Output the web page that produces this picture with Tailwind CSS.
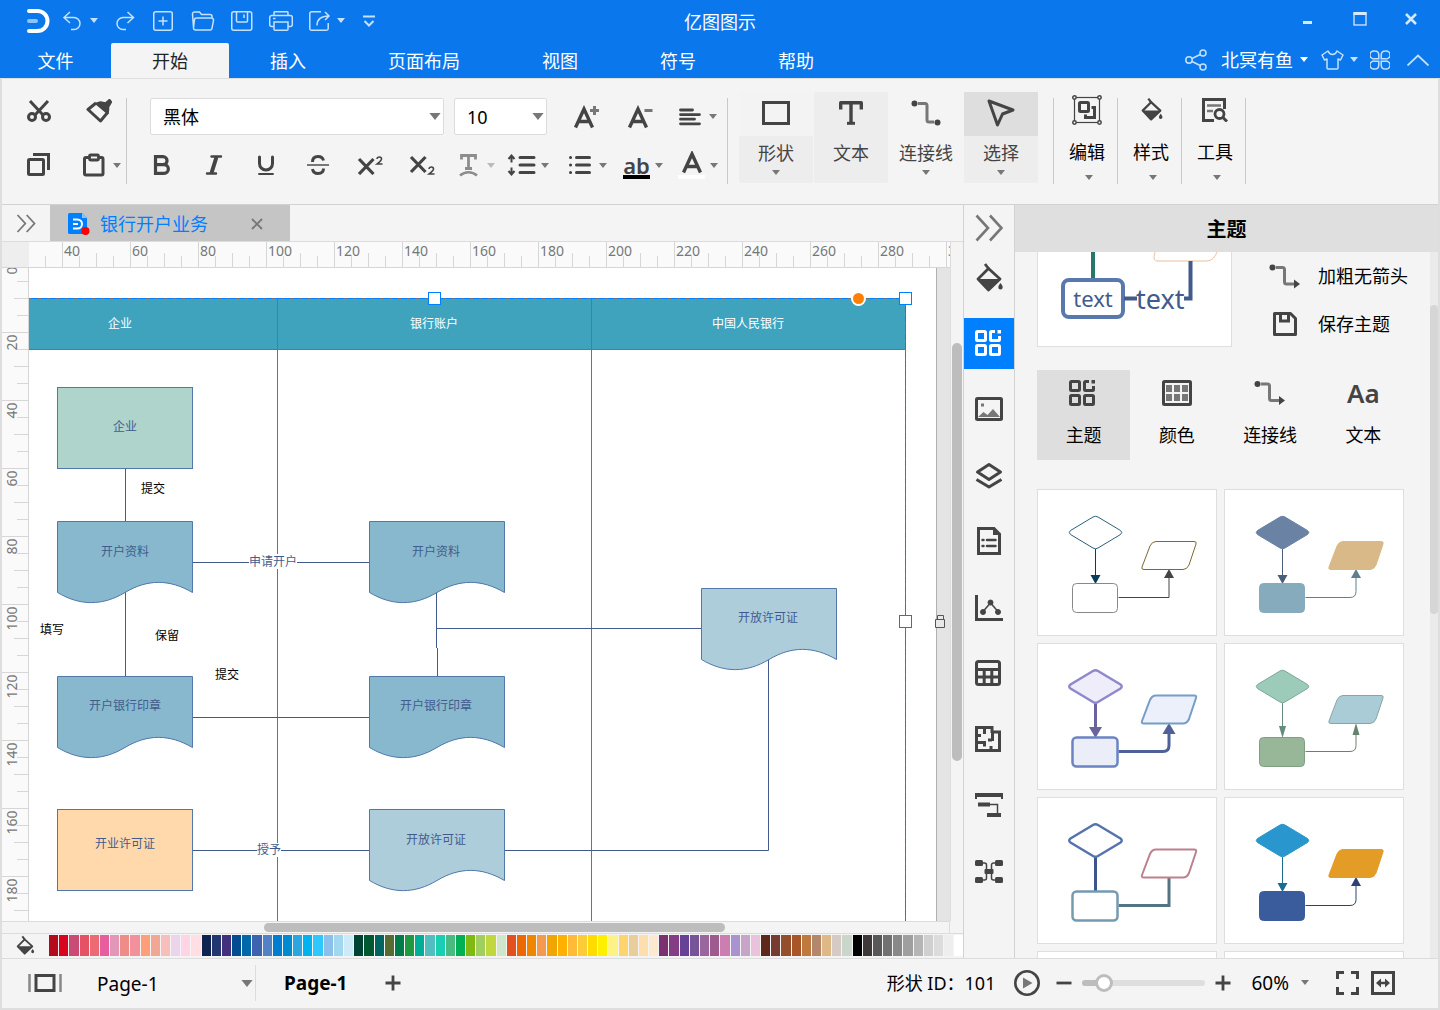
<!DOCTYPE html>
<html lang="zh-CN">
<head>
    <meta charset="UTF-8">
    <meta name="viewport" content="width=device-width, initial-scale=1.0">
    <title>亿图图示</title>
    <script src="https://cdn.jsdelivr.net/npm/@tailwindcss/browser@4"></script>
    <style>
        body {
            font-family: 'Noto Sans', 'Noto Sans CJK SC', sans-serif;
        }
        button, select {
            flex-shrink: 0;
        }
        svg {
            flex-shrink: 0;
        }
    </style>
</head>
<body class="h-screen flex flex-col overflow-hidden bg-[#f4f4f4] text-lg leading-6 text-black">

    <!-- Shared icons -->
    <svg class="hidden">
        <symbol id="caret" viewBox="0 0 8 5"><path d="M0 0h8L4 5z" fill="currentColor"/></symbol>
        <symbol id="bucket" viewBox="0 0 28 30">
            <path d="M3 17 13.500 6.500 25 17 13.500 28z" fill="none" stroke="currentColor" stroke-width="2.800" stroke-linejoin="round"/>
            <path d="M3 17h22L13.500 28z" fill="currentColor"/>
            <path d="M10 2l3.500 4.500" stroke="currentColor" stroke-width="2.800" fill="none"/>
            <path d="M25.500 21c1.500 2 2.200 3 2.200 4.300a2.200 2.200 0 0 1-4.400 0c0-1.300.7-2.300 2.200-4.300z" fill="currentColor"/>
        </symbol>
        <symbol id="grid" viewBox="0 0 26 26">
            <g fill="none" stroke="currentColor" stroke-width="3">
                <rect x="1.500" y="1.500" width="9" height="9" rx="1"/>
                <rect x="1.500" y="15.500" width="9" height="9" rx="1"/>
                <rect x="15.500" y="15.500" width="9" height="9" rx="1"/>
                <path d="M20 1.500h-3.500a1 1 0 0 0-1 1v7a1 1 0 0 0 1 1h7a1 1 0 0 0 1-1V6"/>
            </g>
            <path d="M22.500 0H26v3.500h-3.500z" fill="currentColor"/>
        </symbol>
        <symbol id="connector" viewBox="0 0 32 25">
            <path d="M7 3.500h6.500a2 2 0 0 1 2 2V18a2 2 0 0 0 2 2H26" fill="none" stroke="#777" stroke-width="3"/>
            <circle cx="3.500" cy="3.500" r="3" fill="#444"/>
            <path d="M25 15.500v9l6-4.500z" fill="#444"/>
        </symbol>
        <symbol id="chevrons" viewBox="0 0 28 28">
            <path d="M1.500 1.500 13 14 1.500 26.500M15 1.500 26.500 14 15 26.500" fill="none" stroke="#777" stroke-width="2.600"/>
        </symbol>
    </svg>

    <header class="bg-[#0a77ec] text-white">
        <!-- Title bar -->
        <div class="grid grid-cols-[1fr_auto_1fr] items-center h-[43px] text-[#c6e1fd]">
            <div class="flex items-center pl-[26px] pb-0.5">
                <svg class="w-6 h-6" viewBox="0 0 24 24" fill="none" stroke-linecap="round">
                    <path d="M3 2h8.500a10 10 0 0 1 0 20H3" stroke="#fff" stroke-width="4"/>
                    <path d="M3 12h7" stroke="#8cc3fb" stroke-width="4"/>
                </svg>
                <button class="flex items-center ml-3" aria-label="撤销">
                    <svg class="w-5 h-5" viewBox="0 0 20 20" fill="none" stroke="currentColor" stroke-width="1.500"><path d="M8 1 2 6.500 8 12M2 6.500h10a6 6 0 0 1 0 12H9"/></svg>
                    <svg class="w-2 h-[5px] ml-2"><use href="#caret"/></svg>
                </button>
                <button class="ml-[17px]" aria-label="重做">
                    <svg class="w-5 h-5" viewBox="0 0 20 20" fill="none" stroke="currentColor" stroke-width="1.500"><path d="M12.500 1l6 5.500-6 5.500M18.500 6.500H8a6 6 0 0 0 0 12h3"/></svg>
                </button>
                <button class="ml-[18px]" aria-label="新建">
                    <svg class="w-5 h-5" viewBox="0 0 20 20" fill="none" stroke="currentColor" stroke-width="1.500"><rect x=".75" y=".75" width="18.500" height="18.500" rx="2"/><path d="M10 5.500v9M5.500 10h9"/></svg>
                </button>
                <button class="ml-[18px]" aria-label="打开">
                    <svg class="w-6 h-5" viewBox="0 0 24 20" fill="none" stroke="currentColor" stroke-width="1.500"><path d="M2.500 16.500 1.500 3a2 2 0 0 1 2-2h5l2 2.500h8.500a2 2 0 0 1 2 2v1.500M5.500 7h15a2 2 0 0 1 2 2.300l-1.500 8a2 2 0 0 1-2 1.700H4.500a2 2 0 0 1-2-2.300l1-8A2 2 0 0 1 5.500 7z"/></svg>
                </button>
                <button class="ml-4" aria-label="保存">
                    <svg class="w-[22px] h-5" viewBox="0 0 22 20" fill="none" stroke="currentColor" stroke-width="1.500"><rect x=".75" y=".75" width="20" height="18.500" rx="2"/><path d="M5.500 1v9a1 1 0 0 0 1 1h9a1 1 0 0 0 1-1V1M13 3.500V7"/></svg>
                </button>
                <button class="ml-4" aria-label="打印">
                    <svg class="w-6 h-5" viewBox="0 0 24 20" fill="none" stroke="currentColor" stroke-width="1.500"><path d="M5 4.500V1.700a1 1 0 0 1 1-1h12a1 1 0 0 1 1 1v2.800M5 15.500H2.700a2 2 0 0 1-2-2v-7a2 2 0 0 1 2-2h18.600a2 2 0 0 1 2 2v7a2 2 0 0 1-2 2H19M5 11h14v7.200a1 1 0 0 1-1 1H6a1 1 0 0 1-1-1zM4 7.500h2.500"/></svg>
                </button>
                <button class="flex items-center ml-4" aria-label="导出">
                    <svg class="w-[22px] h-5" viewBox="0 0 22 20" fill="none" stroke="currentColor" stroke-width="1.500"><path d="M12 .75H2.500a1.700 1.700 0 0 0-1.700 1.700v15.100a1.700 1.700 0 0 0 1.700 1.700h15a1.700 1.700 0 0 0 1.700-1.700V12M8 14.500c0-6 4-9.500 12-9.500M16 1l4 4-4 4"/></svg>
                    <svg class="w-2 h-[5px] ml-[6px]"><use href="#caret"/></svg>
                </button>
                <button class="ml-[18px]" aria-label="自定义快速访问工具栏">
                    <svg class="w-3 h-3" viewBox="0 0 12 12" fill="none" stroke="currentColor" stroke-width="2"><path d="M0 1.500h12M1.500 6 6 10.500 10.500 6"/></svg>
                </button>
            </div>
            <h1 class="text-white">亿图图示</h1>
            <div class="flex items-center justify-end pr-[23px] pb-[6px] text-[#d5e9ff]">
                <button aria-label="最小化"><svg class="w-[10px] h-4" viewBox="0 0 10 16"><path d="M0 11.500h9" stroke="currentColor" stroke-width="3"/></svg></button>
                <button class="ml-10" aria-label="最大化"><svg class="w-[14px] h-[14px]" viewBox="0 0 14 14" fill="none" stroke="currentColor"><rect x="1" y="1" width="12" height="12" stroke-width="1.300"/><path d="M.5 1.500h13" stroke-width="3"/></svg></button>
                <button class="ml-[38px]" aria-label="关闭"><svg class="w-3 h-3" viewBox="0 0 12 12"><path d="M1 1l10 10M11 1 1 11" stroke="currentColor" stroke-width="2.500"/></svg></button>
            </div>
        </div>

        <!-- Menu tabs -->
        <div class="flex items-stretch justify-between h-[35px]">
            <nav class="flex">
                <button class="w-[111px]">文件</button>
                <button class="px-[41px] bg-[#f4f4f4] text-[#222] rounded-t-xs">开始</button>
                <button class="px-[41px]">插入</button>
                <button class="px-[41px]">页面布局</button>
                <button class="px-[41px]">视图</button>
                <button class="px-[41px]">符号</button>
                <button class="px-[41px]">帮助</button>
            </nav>
            <div class="flex items-center pr-[11px] pb-0.5 text-[#c6e1fd]">
                <button aria-label="分享">
                    <svg class="w-[22px] h-[22px]" viewBox="0 0 22 22" fill="none" stroke="currentColor" stroke-width="1.500"><circle cx="4" cy="11" r="3.200"/><circle cx="18" cy="4" r="3"/><circle cx="18" cy="18" r="3"/><path d="M7 9.500l8.200-4M7 12.500l8.200 4"/></svg>
                </button>
                <button class="flex items-center ml-[14px] text-white">北冥有鱼
                    <svg class="w-2 h-[5px] ml-[7px]"><use href="#caret"/></svg>
                </button>
                <button class="flex items-center ml-[13px]" aria-label="皮肤">
                    <svg class="w-[23px] h-5" viewBox="0 0 23 20" fill="none" stroke="currentColor" stroke-width="1.500" stroke-linejoin="round"><path d="M7 1 1 5l2.500 5 2.500-1v9a1 1 0 0 0 1 1h9a1 1 0 0 0 1-1V9l2.500 1L22 5l-6-4c-1 2.500-2.500 3.500-4.500 3.500S8 3.500 7 1z"/></svg>
                    <svg class="w-2 h-[5px] ml-[6px]"><use href="#caret"/></svg>
                </button>
                <button class="ml-3" aria-label="应用">
                    <svg class="w-5 h-5" viewBox="0 0 20 20" fill="none" stroke="currentColor" stroke-width="1.500"><path d="M4.800 1A4 4 0 1 0 4.800 8.800H8.800V4.800A4 4 0 0 0 4.800 1zM15.200 1A4 4 0 1 1 15.200 8.800H11.200V4.800A4 4 0 0 1 15.200 1zM4.800 19A4 4 0 1 1 4.800 11.200H8.800V15.200A4 4 0 0 1 4.800 19zM15.200 19A4 4 0 1 0 15.200 11.200H11.200V15.200A4 4 0 0 0 15.200 19z"/></svg>
                </button>
                <button class="ml-[17px]" aria-label="收起功能区">
                    <svg class="w-[22px] h-3" viewBox="0 0 22 12" fill="none" stroke="currentColor" stroke-width="1.800"><path d="M.5 11.500 11 1.500l10.500 10"/></svg>
                </button>
            </div>
        </div>
    </header>

    <div class="flex-1 min-h-0 flex flex-col border-x-2 border-b-2 border-t border-[#dedede]">

        <!-- Ribbon -->
        <div class="flex items-start h-[126px] border-b border-[#d2d2d2] text-[#444]">
            <div class="flex flex-col gap-[30px] mt-[19px] pt-px pl-[25px] w-[125px] h-[86px] border-r border-[#c9c9c9]">
                <div class="flex gap-[35px]">
                    <button aria-label="剪切">
                        <svg class="w-6 h-6" viewBox="0 0 24 24" fill="none" stroke="currentColor" stroke-width="3"><path d="M3 2l13 14M21 2 8 16"/><circle cx="5" cy="18" r="3.500"/><circle cx="19" cy="18" r="3.500"/></svg>
                    </button>
                    <button aria-label="格式刷">
                        <svg class="w-[26px] h-6" viewBox="0 0 26 24" fill="none" stroke="currentColor"><path d="M10 4 2 10.500 14.500 22l7.500-9" stroke-width="3" stroke-linejoin="round"/><path d="M9.500 4.500l5-1.500 5 1 4-3.500 2 2.500-3 5c0 2 .5 4-1 6.500z" fill="currentColor" stroke-width="1.500" stroke-linejoin="round"/></svg>
                    </button>
                </div>
                <div class="flex gap-8">
                    <button aria-label="复制">
                        <svg class="w-6 h-6" viewBox="0 0 24 24" fill="none" stroke="currentColor"><rect x="1.500" y="6.500" width="15" height="15" stroke-width="3" rx="1"/><path d="M6 1.500h15.500V17" stroke-width="3"/></svg>
                    </button>
                    <button class="flex items-center" aria-label="粘贴">
                        <svg class="w-[23px] h-6" viewBox="0 0 23 24" fill="none" stroke="currentColor"><path d="M6 4.500H3a1.500 1.500 0 0 0-1.500 1.500v14.500A1.500 1.500 0 0 0 3 22h15.500a1.500 1.500 0 0 0 1.500-1.500V6a1.500 1.500 0 0 0-1.500-1.500h-3" stroke-width="3"/><rect x="6.500" y="2" width="9" height="5" rx="1" stroke-width="2.800"/></svg>
                        <svg class="w-2 h-[5px] ml-[7px] text-[#777]"><use href="#caret"/></svg>
                    </button>
                </div>
            </div>

            <div class="flex flex-col gap-4 mt-[19px] pl-[21px] w-[601px] h-[86px] border-r border-[#c9c9c9]">
                <div class="flex items-center h-[37px] pl-0.5">
                    <div class="relative">
                        <select aria-label="字体" class="block appearance-none w-[294px] h-[37px] pl-3 bg-white border border-[#dcdcdc] rounded-xs text-black">
                            <option>黑体</option>
                        </select>
                        <svg class="absolute right-[3px] top-[15px] w-3 h-[7px] text-[#777] pointer-events-none"><use href="#caret"/></svg>
                    </div>
                    <div class="relative ml-[10px]">
                        <select aria-label="字号" class="block appearance-none w-[93px] h-[37px] pl-3 bg-white border border-[#dcdcdc] rounded-xs text-black">
                            <option>10</option>
                        </select>
                        <svg class="absolute right-[3px] top-[15px] w-3 h-[7px] text-[#777] pointer-events-none"><use href="#caret"/></svg>
                    </div>
                    <button class="ml-[26px]" aria-label="增大字号">
                        <svg class="w-[26px] h-6" viewBox="0 0 26 24" fill="none" stroke="currentColor" stroke-width="3.400"><path d="M2.500 22.500 11 4l8.500 18.500M5.500 16.500h11"/><path d="M21.500 1v9M17 5.500h9" stroke="#777" stroke-width="3"/></svg>
                    </button>
                    <button class="ml-7" aria-label="减小字号">
                        <svg class="w-[26px] h-6" viewBox="0 0 26 24" fill="none" stroke="currentColor" stroke-width="3.400"><path d="M2.500 22.500 11 4l8.500 18.500M5.500 16.500h11"/><path d="M17.500 5.500H25.500" stroke="#777" stroke-width="3"/></svg>
                    </button>
                    <button class="flex items-center ml-[26px]" aria-label="对齐">
                        <svg class="w-[22px] h-[18px]" viewBox="0 0 22 18" fill="none" stroke="currentColor" stroke-width="2.800" stroke-linecap="round"><path d="M1.500 2h12M1.500 6.600h19M1.500 11.200h14M1.500 15.800h19"/></svg>
                        <svg class="w-2 h-[5px] ml-2 text-[#777]"><use href="#caret"/></svg>
                    </button>
                </div>

                <div class="flex items-center h-7">
                    <button aria-label="加粗">
                        <svg class="w-7 h-5" viewBox="0 0 28 20" fill="none" stroke="currentColor" stroke-width="3.200"><path d="M7.500 1.600H15a4 4 0 0 1 0 8.100H7.500zM7.500 9.700H16a4.300 4.300 0 0 1 0 8.700H7.500z"/></svg>
                    </button>
                    <button class="ml-6" aria-label="倾斜">
                        <svg class="w-7 h-5" viewBox="0 0 28 20" fill="none" stroke="currentColor" stroke-linecap="round"><path d="M11.500 1.500H21M7 18.500h9" stroke-width="2.400"/><path d="M16.500 2l-5 16" stroke-width="4" stroke-linecap="butt"/></svg>
                    </button>
                    <button class="ml-6" aria-label="下划线">
                        <svg class="w-7 h-5" viewBox="0 0 28 20" fill="none" stroke="currentColor" stroke-linecap="round"><path d="M7.500 2v6.500a6.500 6.500 0 0 0 13 0V2" stroke-width="3"/><path d="M7 19h14" stroke-width="1.800"/></svg>
                    </button>
                    <button class="ml-6" aria-label="删除线">
                        <svg class="w-7 h-5" viewBox="0 0 28 20" fill="none" stroke="currentColor"><path d="M8.500 7C8.500 3.500 10.500 1.500 14 1.500S19 3.500 19.500 5.500M8.500 14c.5 3 2.500 4.500 5.500 4.500 3.500 0 5.500-2 5.500-5" stroke-width="3"/><path d="M3 10h22" stroke="#777" stroke-width="2"/></svg>
                    </button>
                    <button class="ml-6" aria-label="上标">
                        <svg class="w-7 h-5" viewBox="0 0 28 20" fill="none" stroke="currentColor"><path d="M3 4l14.500 15M17.500 4 3 19" stroke-width="3.200"/><path d="M21 4c.3-2.600 4.500-2.600 4.500 0 0 1.500-2 3-4.500 5h5.500" stroke-width="1.600"/></svg>
                    </button>
                    <button class="ml-6" aria-label="下标">
                        <svg class="w-7 h-5" viewBox="0 0 28 20" fill="none" stroke="currentColor"><path d="M3 2l14.500 15M17.500 2 3 17" stroke-width="3.200"/><path d="M21 14c.3-2.600 4.500-2.600 4.500 0 0 1.500-2 3-4.500 5h5.500" stroke-width="1.600"/></svg>
                    </button>
                    <button class="flex items-center ml-5 text-[#8d8d8d]" aria-label="文字效果">
                        <svg class="w-6 h-6" viewBox="0 0 24 24" fill="none" stroke="currentColor"><path d="M5.500 6.500v-4h14v4M12.500 3v12M9 15.500h7" stroke-width="2.800"/><path d="M4 22.500c5-4.500 12-4.500 17 0" stroke-width="2.500"/></svg>
                        <svg class="w-2 h-[5px] ml-[7px] text-[#bbb]"><use href="#caret"/></svg>
                    </button>
                    <button class="flex items-center ml-3" aria-label="行距">
                        <svg class="w-[29px] h-[22px]" viewBox="0 0 29 22" fill="none" stroke="currentColor"><path d="M4.500 1.500v7M1.500 5l3-3.500 3 3.500M4.500 13.500v7M1.500 17l3 3.500 3-3.500" stroke-width="2"/><path d="M13 3.500h14M13 11h14M13 18.500h14" stroke-width="3" stroke-linecap="round"/></svg>
                        <svg class="w-2 h-[5px] ml-[5px] text-[#777]"><use href="#caret"/></svg>
                    </button>
                    <button class="flex items-center ml-5" aria-label="项目符号">
                        <svg class="w-[22px] h-[22px]" viewBox="0 0 22 22" fill="none" stroke="currentColor" stroke-linecap="round" stroke-width="3"><path d="M7.500 3.500h13M7.500 11h13M7.500 18.500h13M1.500 3.500h.1M1.500 11h.1M1.500 18.500h.1"/></svg>
                        <svg class="w-2 h-[5px] ml-2 text-[#777]"><use href="#caret"/></svg>
                    </button>
                    <button class="flex items-center ml-4" aria-label="文字背景色">
                        <span class="flex flex-col items-center w-[27px] h-7 border-b-4 border-black text-[22px] leading-7 font-semibold">ab</span>
                        <svg class="w-2 h-[5px] ml-[5px] text-[#777]"><use href="#caret"/></svg>
                    </button>
                    <button class="flex items-center ml-[15px]" aria-label="文字颜色">
                        <span class="flex flex-col items-center w-[27px] h-7 border-b-4 border-white">
                            <svg class="w-5 h-6" viewBox="0 0 20 24" fill="none" stroke="currentColor" stroke-width="3.400"><path d="M1.500 21.500 10 3l8.500 18.500M4.500 15.500h11"/></svg>
                        </span>
                        <svg class="w-2 h-[5px] ml-[5px] text-[#777]"><use href="#caret"/></svg>
                    </button>
                </div>
            </div>

            <div class="flex gap-px mt-[13px] ml-[11px]">
                <button class="flex flex-col items-center w-[74px] h-[91px] bg-[#ededed] rounded-xs">
                    <span class="flex items-center justify-center w-full h-11 pb-0.5 bg-[#f3f3f3]">
                        <svg class="w-7 h-6" viewBox="0 0 28 24"><rect x="1.500" y="1.500" width="25" height="21" fill="none" stroke="#444" stroke-width="3"/></svg>
                    </span>
                    <span class="h-6 mt-[5px]">形状</span>
                    <svg class="w-2 h-[5px] mt-[5px] text-[#777]"><use href="#caret"/></svg>
                </button>
                <button class="flex flex-col items-center w-[74px] h-[91px] bg-[#ededed] rounded-xs">
                    <span class="flex items-center justify-center w-full h-11 pb-0.5">
                        <svg class="w-6 h-6" viewBox="0 0 24 24" fill="none" stroke="#444" stroke-width="3.400"><path d="M1.700 8.500V1.700h20.600v6.800M12 2v20" stroke-linejoin="round"/><path d="M8 22.300h8" stroke-width="3"/></svg>
                    </span>
                    <span class="h-6 mt-[5px]">文本</span>
                </button>
                <button class="flex flex-col items-center w-[74px] h-[91px]">
                    <span class="flex items-center justify-center w-full h-11 pb-0.5">
                        <svg class="w-[30px] h-[26px]" viewBox="0 0 30 26"><path d="M7 3.500h7a2 2 0 0 1 2 2V20a2 2 0 0 0 2 2h5" fill="none" stroke="#777" stroke-width="3"/><circle cx="3.500" cy="3.500" r="3" fill="#444"/><circle cx="26.500" cy="22.500" r="3" fill="#444"/></svg>
                    </span>
                    <span class="h-6 mt-[5px]">连接线</span>
                    <svg class="w-2 h-[5px] mt-[5px] text-[#777]"><use href="#caret"/></svg>
                </button>
                <button class="flex flex-col items-center w-[74px] h-[91px] bg-[#ededed] rounded-xs">
                    <span class="flex items-center justify-center w-full h-11 pb-0.5 bg-[#dedede]">
                        <svg class="w-7 h-7" viewBox="0 0 28 28"><path d="M2 2l24 9-10.500 4-5 11z" fill="none" stroke="#444" stroke-width="3" stroke-linejoin="round"/></svg>
                    </span>
                    <span class="h-6 mt-[5px]">选择</span>
                    <svg class="w-2 h-[5px] mt-[5px] text-[#777]"><use href="#caret"/></svg>
                </button>
            </div>

            <div class="flex mt-[19px] ml-[15px] h-[86px] border-l border-[#c9c9c9] text-black">
                <button class="flex flex-col items-center w-16 pl-[3px] border-r border-[#c9c9c9]">
                    <span class="flex items-center justify-center h-6">
                        <svg class="w-[30px] h-[30px]" viewBox="0 0 30 30" fill="none" stroke="#444"><rect x="2.500" y="2.500" width="25" height="25" stroke-width="1.200"/><g fill="#f4f4f4" stroke-width="1.500"><circle cx="2.500" cy="2.500" r="1.700"/><circle cx="27.500" cy="2.500" r="1.700"/><circle cx="2.500" cy="27.500" r="1.700"/><circle cx="27.500" cy="27.500" r="1.700"/></g><rect x="7.500" y="7.500" width="9" height="9" rx="1" stroke-width="3"/><path d="M19.500 12.500h3v10h-9v-3" stroke-width="3"/></svg>
                    </span>
                    <span class="h-6 mt-[18px]">编辑</span>
                    <svg class="w-2 h-[5px] mt-[11px] ml-1 text-[#777]"><use href="#caret"/></svg>
                </button>
                <button class="flex flex-col items-center w-16 pl-[3px] border-r border-[#c9c9c9]">
                    <svg class="w-[23px] h-6 -mt-px mb-px text-[#444]"><use href="#bucket"/></svg>
                    <span class="h-6 mt-[18px]">样式</span>
                    <svg class="w-2 h-[5px] mt-[11px] ml-1 text-[#777]"><use href="#caret"/></svg>
                </button>
                <button class="flex flex-col items-center w-16 pl-[3px] border-r border-[#c9c9c9]">
                    <svg class="w-[26px] h-6" viewBox="0 0 26 24" fill="none" stroke="#444" stroke-width="3"><path d="M12 22.500H1.500v-21h21V11"/><path d="M5 7.500h14M5 13h6" stroke="#777" stroke-width="2.500"/><circle cx="17.500" cy="16" r="4.500" stroke-width="2.800"/><path d="M20.500 19l4.500 4.500"/></svg>
                    <span class="h-6 mt-[18px]">工具</span>
                    <svg class="w-2 h-[5px] mt-[11px] ml-1 text-[#777]"><use href="#caret"/></svg>
                </button>
            </div>
        </div>

        <div class="flex flex-1 min-h-0">

            <!-- Document area -->
            <main class="flex flex-col flex-1 min-w-0">
                <div class="flex h-9 shrink-0">
                    <button class="flex items-center pl-[14px] w-12" aria-label="展开符号库"><svg class="w-5 h-[19px]"><use href="#chevrons"/></svg></button>
                    <div class="flex items-center w-60 pl-[18px] pt-0.5 bg-[#c5c5c5]">
                        <svg class="w-[22px] h-[22px]" viewBox="0 0 22 22"><path d="M1.500 0H14l5 5v14.500A1.500 1.500 0 0 1 17.500 21h-16A1.500 1.500 0 0 1 0 19.500v-18A1.500 1.500 0 0 1 1.500 0z" fill="#0080ff"/><path d="M14 0l5 5h-5z" fill="#8cc3fb"/><path d="M5 6.500h4.500a4.500 4.500 0 0 1 0 9H5" fill="none" stroke="#fff" stroke-width="2"/><path d="M5 11h5" stroke="#fff" stroke-width="2"/><circle cx="17.500" cy="18" r="4" fill="#f00"/></svg>
                        <span class="ml-[10px] text-[#0080ff]">银行开户业务</span>
                        <button class="ml-[43px]" aria-label="关闭文档"><svg class="w-3 h-3" viewBox="0 0 12 12"><path d="M1 1l10 10M11 1 1 11" stroke="#777" stroke-width="1.800"/></svg></button>
                    </div>
                </div>

                <div class="flex flex-1 min-h-0 border-t border-[#dcdcdc]">
                    <div class="flex flex-col flex-1 min-w-0">
                        <div class="flex h-[26px] shrink-0 border-b border-[#d6d6d6]">
                            <div class="w-[27px] shrink-0 bg-[#eee]"></div>
                            <svg id="rulerX" class="flex-1 h-[25px] bg-[#fafafa]" font-size="14" fill="#777"></svg>
                        </div>
                        <div class="flex flex-1 min-h-0">
                            <svg id="rulerY" class="w-[27px] h-full bg-[#fafafa] border-r border-[#d6d6d6]" font-size="14" fill="#777"></svg>
                            <div class="flex-1 min-w-0 overflow-hidden bg-[#e4e4e4]">
                                <!-- Drawing page -->
                                <svg class="w-[922px] h-[653px]" viewBox="29 268 922 653" font-size="12" text-anchor="middle">
                                    <defs>
                                        <path id="doc" d="M0 0H135V71C112 57.500 90 57.500 67.500 71 45 84.500 22.500 84.500 0 71z"/>
                                    </defs>
                                    <rect x="29" y="268" width="907" height="653" fill="#fff"/>
                                    <path d="M936.500 268v653" stroke="#b0b0b0"/>
                                    <rect x="28.500" y="298.500" width="877" height="51" fill="#40a3be" stroke="#5278ab"/>
                                    <path d="M277.500 298v623M591.500 298v623" stroke="#5278ab"/>

                                    <g fill="none" stroke="#0080ff">
                                        <path d="M29 298.500H905.500V921"/>
                                        <path d="M29 298.500H905.500V921" stroke="#6a7482" stroke-dasharray="3 6"/>
                                    </g>

                                    <g fill="none" stroke="#425b8c">
                                        <path d="M125.500 468v53M125.500 592v84M192 562.500h177M192 717.500h177M192 850.500h177M504 850.500h264.500V659"/>
                                        <path d="M436.500 592v56M437.500 648v28M437 628.500h264"/>
                                    </g>

                                    <g stroke="#5278ab">
                                        <rect x="57.500" y="387.500" width="135" height="81" fill="#aed4cc"/>
                                        <use href="#doc" x="57.500" y="521.500" fill="#87b8cd"/>
                                        <use href="#doc" x="369.500" y="521.500" fill="#87b8cd"/>
                                        <use href="#doc" x="57.500" y="676.500" fill="#87b8cd"/>
                                        <use href="#doc" x="369.500" y="676.500" fill="#87b8cd"/>
                                        <use href="#doc" x="701.500" y="588.500" fill="#adcddb"/>
                                        <use href="#doc" x="369.500" y="809.500" fill="#adcddb"/>
                                        <rect x="57.500" y="809.500" width="135" height="81" fill="#ffd9ac"/>
                                    </g>

                                    <rect x="249" y="554" width="48" height="15" fill="#fff"/>
                                    <rect x="257" y="843" width="24" height="14" fill="#fff"/>

                                    <g fill="#fff">
                                        <text x="120" y="328">企业</text>
                                        <text x="434" y="328">银行账户</text>
                                        <text x="748" y="328">中国人民银行</text>
                                    </g>
                                    <g fill="#425b8c">
                                        <text x="125" y="431">企业</text>
                                        <text x="125" y="556">开户资料</text>
                                        <text x="436" y="556">开户资料</text>
                                        <text x="273" y="566">申请开户</text>
                                        <text x="125" y="710">开户银行印章</text>
                                        <text x="436" y="710">开户银行印章</text>
                                        <text x="125" y="848">开业许可证</text>
                                        <text x="436" y="844">开放许可证</text>
                                        <text x="768" y="622">开放许可证</text>
                                        <text x="269" y="854">授予</text>
                                    </g>
                                    <g fill="#000">
                                        <text x="153" y="493">提交</text>
                                        <text x="52" y="634">填写</text>
                                        <text x="167" y="640">保留</text>
                                        <text x="227" y="679">提交</text>
                                    </g>

                                    <!-- Selection handles -->
                                    <g fill="#fff" stroke="#0080ff">
                                        <rect x="428.500" y="292.500" width="12" height="12"/>
                                        <rect x="899.500" y="292.500" width="12" height="12"/>
                                        <rect x="899.500" y="615.500" width="12" height="12"/>
                                    </g>
                                    <circle cx="858.500" cy="298.500" r="6.500" fill="#ff8000" stroke="#fff" stroke-width="2"/>
                                    <path d="M935.500 619.500h9v8h-9zM937.500 619.500v-4h6v4" fill="#e8e8e8" stroke="#555"/>
                                </svg>
                            </div>
                        </div>
                    </div>
                    <div class="w-[13px] shrink-0 border-l border-[#dcdcdc] pt-[101px] px-px">
                        <div class="h-[418px] rounded-full bg-[#bdbdbd]"></div>
                    </div>
                </div>

                <div class="h-3 shrink-0 mr-[13px] border-t border-r border-[#dcdcdc] pt-px pl-[262px]">
                    <div class="w-[461px] h-[9px] rounded-full bg-[#bdbdbd]"></div>
                </div>

                <!-- Colour bar -->
                <div class="flex items-center h-[25px] shrink-0 border-t border-[#dcdcdc] pl-[13px] pb-0.5">
                    <button aria-label="填充颜色"><svg class="w-5 h-5 text-[#444]"><use href="#bucket"/></svg></button>
                    <div id="swatches" class="flex flex-1 gap-px h-[21px] ml-[14px]"></div>
                </div>
            </main>

            <!-- Side tool strip -->
            <aside class="flex flex-col gap-[15px] w-[52px] shrink-0 border-x border-[#d2d2d2] text-[#444]">
                <button class="flex items-center justify-center h-8 mt-[7px] -mb-[7px]" aria-label="收起面板"><svg class="w-7 h-7"><use href="#chevrons"/></svg></button>
                <button class="flex items-center justify-center h-[51px] pb-0.5" aria-label="填充"><svg class="w-7 h-[30px]"><use href="#bucket"/></svg></button>
                <button class="flex items-center justify-center h-[51px] pb-0.5 pr-0.5 bg-[#0080ff] text-white" aria-label="主题"><svg class="w-[26px] h-[26px]"><use href="#grid"/></svg></button>
                <button class="flex items-center justify-center h-[51px] pb-0.5" aria-label="图片">
                    <svg class="w-7 h-6" viewBox="0 0 28 24"><rect x="1.500" y="1.500" width="25" height="21" rx="1" fill="none" stroke="#444" stroke-width="3"/><path d="M6 6.500h3v3H6zM3 20l5.500-5 4 3 5.500-6 7 8z" fill="#777"/></svg>
                </button>
                <button class="flex items-center justify-center h-[51px]" aria-label="图层">
                    <svg class="w-7 h-7" viewBox="0 0 28 28" fill="none" stroke="#444" stroke-width="3" stroke-linejoin="round"><path d="M14 2.500l11.500 7.500L14 17.500 2.500 10z"/><path d="M1.500 17.500 14 25l12.500-7.500"/></svg>
                </button>
                <button class="flex items-center justify-center h-[51px] pb-0.5" aria-label="备注">
                    <svg class="w-6 h-7" viewBox="0 0 24 28" fill="none" stroke="#444" stroke-width="3"><path d="M1.500 1.500H17l5.500 5.500v19.500h-21z"/><path d="M16 1v7h7z" fill="#444" stroke="none"/><path d="M10 13h8.500M10 19h8.500M5.500 13h1M5.500 19h1" stroke-width="2.500" stroke-linecap="round"/></svg>
                </button>
                <button class="flex items-center justify-center h-[51px]" aria-label="图表">
                    <svg class="w-7 h-[26px]" viewBox="0 0 28 26" fill="none" stroke="#444"><path d="M1.500 0v24.500H28" stroke-width="3"/><path d="M8 16.500 15.500 8l7.500 8.500" stroke-width="1.500"/><g fill="#444"><circle cx="8" cy="17" r="2.500"/><circle cx="15.500" cy="7.500" r="2.500"/><circle cx="23" cy="17" r="2.500"/></g></svg>
                </button>
                <button class="flex items-center justify-center h-[51px] pb-0.5 pr-0.5" aria-label="表格">
                    <svg class="w-[26px] h-[26px]" viewBox="0 0 26 26" fill="none" stroke="#444" stroke-width="3"><rect x="1.500" y="1.500" width="23" height="23" rx="2"/><path d="M1 9.500h24M1 17h24M9.200 9v16M16.800 9v16"/></svg>
                </button>
                <button class="flex items-center justify-center h-[51px] pb-0.5 pr-0.5" aria-label="平面图">
                    <svg class="w-[26px] h-[26px]" viewBox="0 0 26 26" fill="none" stroke="#444" stroke-width="3"><path d="M9.500 8V1.500h-8v23h23V6h-7v9M13 14h4M1.500 9.500H6M1.500 16.500H9.500v4M16 20v5M9.500 1.500h7.500V7"/></svg>
                </button>
                <button class="flex items-center justify-center h-[51px] pb-0.5" aria-label="甘特图">
                    <svg class="w-7 h-6" viewBox="0 0 28 24" fill="none" stroke="#444"><path d="M0 2h28" stroke-width="4"/><path d="M1 0v6M27 0v6" stroke-width="2"/><path d="M15 11.500h7.500V20" stroke-width="1.500"/><path d="M3 11.500h12M12 22h14" stroke-width="4"/></svg>
                </button>
                <button class="flex items-center justify-center h-[51px]" aria-label="思维导图">
                    <svg class="w-7 h-6" viewBox="0 0 28 24"><g fill="#444"><rect y="0" width="8" height="6" rx="1.500"/><rect x="20" y="0" width="8" height="6" rx="1.500"/><rect y="17" width="8" height="6" rx="1.500"/><rect x="20" y="17" width="8" height="6" rx="1.500"/><rect x="9.500" y="9" width="9" height="5" rx="1"/></g><path d="M7 3h2.500a2 2 0 0 1 2 2v13a2 2 0 0 1-2 2H7M21 3h-2.500a2 2 0 0 0-2 2v13a2 2 0 0 0 2 2H21" fill="none" stroke="#444" stroke-width="1.500"/></svg>
                </button>
            </aside>

            <!-- Theme panel -->
            <section class="flex flex-col w-[423px] shrink-0">
                <h2 class="flex items-center justify-center h-[47px] pt-0.5 shrink-0 bg-[#dfdfdf] text-xl font-bold">主题</h2>
                <div class="flex flex-1 min-h-0">
                    <div class="flex-1 pl-[22px] overflow-hidden">
                        <div class="flex h-[95px]">
                            <div class="w-[195px] h-[95px] bg-white border border-t-0 border-[#dedede]">
                                <svg class="w-[193px] h-[94px]" viewBox="0 0 193 94" fill="#425b8c">
                                    <path d="M55 0v29" stroke="#29766a" stroke-width="4"/>
                                    <path d="M117 0c-2 7-1 9 3 9h48c6 0 9-4 11-9" fill="none" stroke="#eabf9f"/>
                                    <rect x="25" y="28" width="60" height="37" rx="6" fill="#fff" stroke="#5878ae" stroke-width="4"/>
                                    <path d="M86 46.500h13M146 46.500h6.500V9" fill="none" stroke="#425b8c" stroke-width="4"/>
                                    <text x="55" y="55" font-size="22" text-anchor="middle">text</text>
                                    <text x="98" y="57" font-size="27">text</text>
                                </svg>
                            </div>
                            <div class="flex flex-col pt-[11px] ml-[37px]">
                                <button class="flex items-center h-[26px]"><svg class="w-8 h-[25px]"><use href="#connector"/></svg><span class="ml-[17px]">加粗无箭头</span></button>
                                <button class="flex items-center h-[26px] mt-[22px]">
                                    <span class="flex justify-center w-8"><svg class="w-6 h-6" viewBox="0 0 24 24" fill="none" stroke="#444" stroke-width="3"><path d="M1.500 1.500h16l5 5v16h-21z" stroke-linejoin="round"/><path d="M7.500 2v7h8V2"/></svg></span>
                                    <span class="ml-[17px]">保存主题</span>
                                </button>
                            </div>
                        </div>

                        <div class="grid grid-cols-4 w-[373px] mt-[23px]">
                            <button class="flex flex-col items-center h-[90px] pt-[10px] bg-[#dedede]"><svg class="w-[26px] h-[26px] mr-1 text-[#444]"><use href="#grid"/></svg><span class="mt-[17px]">主题</span></button>
                            <button class="flex flex-col items-center h-[90px] pt-[10px]">
                                <svg class="w-[30px] h-[26px]" viewBox="0 0 30 26"><rect x="1.500" y="1.500" width="27" height="23" fill="none" stroke="#444" stroke-width="3" rx="1"/><path d="M4 5h6v7H4zM12 5h6v7h-6zM20 5h6v7h-6zM4 14h6v7H4zM12 14h6v7h-6zM20 14h6v7h-6z" fill="#777"/></svg>
                                <span class="mt-[17px]">颜色</span>
                            </button>
                            <button class="flex flex-col items-center h-[90px] pt-[10px]"><svg class="w-8 h-[26px]"><use href="#connector"/></svg><span class="mt-[17px]">连接线</span></button>
                            <button class="flex flex-col items-center h-[90px] pt-[10px]"><span class="h-[26px] text-[26px] leading-[26px] font-semibold text-[#444]">Aa</span><span class="mt-[17px]">文本</span></button>
                        </div>

                        <div id="themes" class="grid grid-cols-2 gap-[7px] w-[367px] mt-[29px]"></div>
                    </div>
                    <div class="w-2 bg-[#ebebeb] pt-[53px]">
                        <div class="h-[309px] rounded-full bg-[#d6d6d6]"></div>
                    </div>
                </div>
            </section>
        </div>

        <!-- Status bar -->
        <footer class="flex items-center h-[50px] shrink-0 border-t border-[#dcdcdc] pb-0.5 text-[#444]">
            <button class="ml-[26px]" aria-label="页面视图">
                <svg class="w-[34px] h-[18px]" viewBox="0 0 34 18" fill="none"><rect x="8" y="1.500" width="18" height="15" stroke="#444" stroke-width="3"/><path d="M1.500 0v18M32.500 0v18" stroke="#888" stroke-width="2.500"/></svg>
            </button>
            <div class="relative ml-[35px]">
                <select aria-label="页面" class="block appearance-none w-[159px] h-9 pt-0.5 bg-transparent border-r border-[#dcdcdc] text-[19px] text-black">
                    <option>Page-1</option>
                </select>
                <svg class="absolute right-[3px] top-[15px] w-3 h-[7px] text-[#777] pointer-events-none"><use href="#caret"/></svg>
            </div>
            <button class="ml-7 text-[19px] font-bold text-black">Page-1</button>
            <button class="ml-[38px]" aria-label="新建页面"><svg class="w-4 h-4" viewBox="0 0 16 16"><path d="M8 .5v15M.5 8h15" stroke="#444" stroke-width="2.800"/></svg></button>

            <span class="ml-auto text-black whitespace-nowrap">形状 ID：101</span>
            <button class="ml-[19px]" aria-label="演示">
                <svg class="w-[26px] h-[26px]" viewBox="0 0 26 26"><circle cx="13" cy="13" r="11.700" fill="none" stroke="#444" stroke-width="2.600"/><path d="M9 7.500v11l9.500-5.500z" fill="#777"/></svg>
            </button>
            <button class="ml-4" aria-label="缩小"><svg class="w-4 h-4" viewBox="0 0 16 16"><path d="M.5 8h15" stroke="#444" stroke-width="2.800"/></svg></button>
            <input type="range" min="0" max="100" value="12" aria-label="缩放" class="ml-[10px] w-[123px] h-[6px] appearance-none rounded-full bg-[linear-gradient(90deg,#bdbdbd_16%,#dedede_16%)] [&::-webkit-slider-thumb]:appearance-none [&::-webkit-slider-thumb]:w-[18px] [&::-webkit-slider-thumb]:h-[18px] [&::-webkit-slider-thumb]:rounded-full [&::-webkit-slider-thumb]:bg-white [&::-webkit-slider-thumb]:border-3 [&::-webkit-slider-thumb]:border-[#bdbdbd]">
            <button class="ml-[10px]" aria-label="放大"><svg class="w-4 h-4" viewBox="0 0 16 16"><path d="M8 .5v15M.5 8h15" stroke="#444" stroke-width="2.800"/></svg></button>
            <button class="flex items-center ml-5 text-[19px] text-black">60%<svg class="w-2 h-[5px] ml-3 text-[#777]"><use href="#caret"/></svg></button>
            <button class="ml-[27px]" aria-label="全屏"><svg class="w-[23px] h-6" viewBox="0 0 23 24"><path d="M1.500 8V1.500H8M15 1.500h6.500V8M21.500 16v6.500H15M8 22.500H1.500V16" fill="none" stroke="#444" stroke-width="3"/></svg></button>
            <button class="ml-3 mr-[43px]" aria-label="适应宽度"><svg class="w-6 h-6" viewBox="0 0 24 24"><rect x="1.500" y="1.500" width="21" height="21" fill="none" stroke="#444" stroke-width="3"/><path d="M7 12h10" stroke="#444" stroke-width="2.500"/><path d="M5 12l5-4.500v9zM19 12l-5-4.500v9z" fill="#444"/></svg></button>
        </footer>
    </div>

    <script>
        // --- Rulers ---
        // 20mm is 68px at this zoom, with a tick every 5mm
        const rulerX = document.getElementById('rulerX');
        const rulerY = document.getElementById('rulerY');

        function drawRulers() {
            const width = rulerX.getBoundingClientRect().width;
            const height = rulerY.getBoundingClientRect().height;

            let marks = '';
            for (let i = -1; 33 + i * 17 < width; i++) {
                const x = 33 + i * 17 + 0.5;
                const top = i % 4 === 0 ? 0 : (i % 2 === 0 ? 11 : 14);
                marks += `<path d="M${x} ${top}V25" stroke="#d6d6d6"/>`;
                if (i % 4 === 0) marks += `<text x="${x + 1.5}" y="14">${40 + i * 5}</text>`;
            }
            rulerX.innerHTML = marks;

            marks = '';
            for (let i = 0; i * 17 - 4 < height; i++) {
                const y = i * 17 - 4 + 0.5;
                const left = i % 4 === 0 ? 0 : (i % 2 === 0 ? 12 : 15);
                marks += `<path d="M${left} ${y}H27" stroke="#d6d6d6"/>`;
                if (i % 4 === 0) marks += `<text transform="translate(15 ${y + 2}) rotate(-90)" text-anchor="end">${i * 5}</text>`;
            }
            rulerY.innerHTML = marks;
        }

        drawRulers();
        window.addEventListener('resize', drawRulers);

        // --- Colour bar ---
        const colors = [
            '#b40a1b', '#d9041e', '#c84c74', '#e65265', '#ec6b72', '#e65e9d', '#e296b8', '#ee8d88', '#f2919b', '#ff9f7a', '#f0a894', '#f7bebc', '#ead5ea', '#ffd4e4', '#ffdfe4',
            '#0f2350', '#223770', '#432f7c', '#044b92', '#0068a8', '#3d63b0', '#5282c4', '#007dd0', '#008ad0', '#2ba6e0', '#00b3f0', '#2fc8fa', '#8cc0ea', '#a0d8ef', '#ceeaf6',
            '#004334', '#005830', '#006460', '#556b2f', '#007c48', '#1f9a40', '#00ae9a', '#52bec0', '#19cfb3', '#48bb80', '#00b055', '#80ba10', '#a0cf60', '#c0d83e', '#cfe6c8',
            '#e25020', '#ec6800', '#f08600', '#f39a50', '#f2a500', '#ffb000', '#ffba38', '#fbcb38', '#ffdb00', '#fff000', '#fdf284', '#fdd46e', '#e9cd9a', '#ffdead', '#fde8d0',
            '#7b3070', '#843c85', '#674196', '#755498', '#9a669d', '#9e5b8d', '#cc7eb1', '#a993d0', '#c7a5c8', '#ebc2dc',
            '#5c281a', '#763c31', '#934f2b', '#a85627', '#bf783e', '#b4866c', '#deb887', '#d5cbc4', '#cad5cc',
            '#000000', '#3e3838', '#595757', '#727171', '#888888', '#9f9f9f', '#b5b5b5', '#d0d0d0', '#dcdcdc', '#eeeeee', '#ffffff'
        ];
        document.getElementById('swatches').innerHTML = colors
            .map(c => `<button class="flex-1" style="background:${c}" aria-label="${c}"></button>`)
            .join('');

        // --- Theme thumbnails ---
        // Each part is [fill, stroke, stroke width]; lines are [stroke, width, arrow half width, arrow length]
        const themes = [
            { diamond: ['#fff', '#2b607a', 1], box: ['#fff', '#888', 1], para: ['#fff', '#7d6a33', 1], down: ['#0a3d5c', 1, 5, 8], side: ['#444', 1, 5, 8], round: false },
            { diamond: ['#6a82a3', '#6a82a3', 1], box: ['#85abbd', '#85abbd', 1], para: ['#d9b987', '#d9b987', 1], down: ['#4b5d7d', 1, 5, 8], side: ['#5f7f8e', 1, 5, 8], round: true },
            { diamond: ['#efedfa', '#8f88cc', 2.5], box: ['#ebeef9', '#6a84c4', 2.5], para: ['#ebf0fa', '#759dc8', 2], down: ['#6a639e', 3, 6.5, 10], side: ['#4f6196', 3, 6.5, 10], round: true },
            { diamond: ['#9dcbb9', '#7da898', 1], box: ['#98b798', '#7f9f83', 1], para: ['#a9ccd6', '#85a6a9', 1], down: ['#668a7c', 1, 3.5, 11], side: ['#66836b', 1, 3.5, 11], round: true },
            { diamond: ['#fff', '#5673b0', 2.5], box: ['#fff', '#7599af', 2.5], para: ['#fff', '#bd808e', 2], down: ['#3d5588', 3, 0, 0], side: ['#557483', 3, 0, 0], round: false },
            { diamond: ['#2996cd', '#2996cd', 1], box: ['#3b5c9c', '#3b5c9c', 1], para: ['#e39c26', '#e39c26', 1], down: ['#1c6c8f', 1, 5, 8], side: ['#2d4173', 1, 5, 8], round: true }
        ];

        function thumbnail(t) {
            const paint = ([fill, stroke, width]) => `fill="${fill}" stroke="${stroke}" stroke-width="${width}"`;
            const [dc, dw, da, dl] = t.down;
            const [sc, sw, sa, sl] = t.side;
            const bend = t.round ? 'H125Q131 107.500 131 101.500' : 'H131';
            return `<svg class="w-full" viewBox="0 0 178 145">
                <path d="M57.500 59V${93 - dl}" stroke="${dc}" stroke-width="${dw}"/>
                <path d="M${57.5 - da} ${93 - dl}h${da * 2}L57.500 94z" fill="${dc}"/>
                <path d="M80.500 107.500${bend}V${80 + sl}" fill="none" stroke="${sc}" stroke-width="${sw}"/>
                <path d="M${131 - sa} ${80 + sl}h${sa * 2}L131 79z" fill="${sc}"/>
                <path d="M55 27Q57.500 25.500 60 27L82.500 40.500Q85 42.500 82.500 44.500L60 58Q57.500 59.500 55 58L32.500 44.500Q30 42.500 32.500 40.500Z" ${paint(t.diamond)}/>
                <rect x="34.500" y="93.500" width="45" height="29" rx="4" ${paint(t.box)}/>
                <path d="M118 51.500H156Q159 51.500 158 54L151 75Q149 79.500 145 79.500H106Q103 79.500 104 77L112 56Q114 51.500 118 51.500Z" ${paint(t.para)}/>
            </svg>`;
        }

        document.getElementById('themes').innerHTML = themes
            .map(t => `<button class="h-[147px] bg-white border border-[#dedede]">${thumbnail(t)}</button>`)
            .join('') + '<button class="h-[147px] bg-white border border-[#dedede]"></button>'.repeat(2);
    </script>

</body>
</html>
